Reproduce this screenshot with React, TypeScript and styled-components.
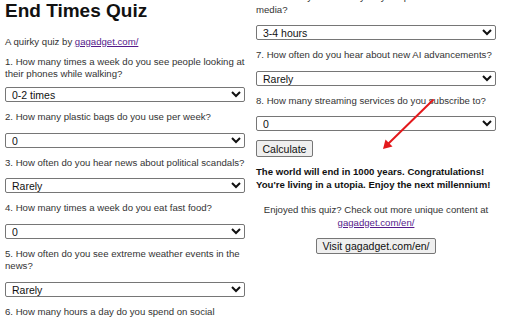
import React from "react";
import styled, { createGlobalStyle } from "styled-components";

const Global = createGlobalStyle`
  html, body { margin: 0; padding: 0; background: #fff; overflow: hidden; }
  body { font-family: "Liberation Sans", Arial, sans-serif; color: #333; }
  #root { width: 512px; height: 320px; overflow: hidden; }
`;

const Page = styled.div`
  position: relative;
  display: grid;
  grid-template-columns: 240px 240px;
  column-gap: 11px;
  padding-left: 5px;
  height: 320px;
  overflow: hidden;
  font-size: 9.6px;
`;

const Column = styled.div<{ $offset?: number }>`
  display: flex;
  flex-direction: column;
  align-items: stretch;
  margin-top: ${(p) => p.$offset ?? 0}px;
`;

const Title = styled.h1`
  margin: 0;
  font-size: 19px;
  line-height: 22px;
  font-weight: 700;
  color: #111;
`;

const Intro = styled.p`
  margin: 12.5px 0 8px;
  line-height: 13px;
`;

const Link = styled.a`
  color: #551a8b;
  text-decoration: underline;
`;

const Label = styled.label<{ $gap?: number }>`
  display: block;
  line-height: 12.5px;
  margin: 0 0 ${(p) => p.$gap ?? 9}px;
`;

const Select = styled.select`
  display: block;
  box-sizing: border-box;
  width: 100%;
  height: 15px;
  margin: 0 0 9px;
  padding: 0 2px;
  font-family: "Liberation Sans", Arial, sans-serif;
  font-size: 10.5px;
  color: #111;
  background: #fff;
  border: 1px solid #767676;
  border-radius: 2px;
`;

const Button = styled.button`
  box-sizing: border-box;
  height: 16.5px;
  padding: 0 5.5px;
  font-family: "Liberation Sans", Arial, sans-serif;
  font-size: 10.56px;
  line-height: 12px;
  color: #111;
  background: #efefef;
  border: 1px solid #767676;
  border-radius: 2px;
`;

const ButtonRow = styled.div<{ $center?: boolean }>`
  display: flex;
  justify-content: ${(p) => (p.$center ? "center" : "flex-start")};
`;

const Result = styled.p`
  margin: 9.5px 0 0;
  font-weight: 700;
  line-height: 12.5px;
  color: #111;
`;

const Promo = styled.p`
  margin: 13px 0 8.5px;
  text-align: center;
  line-height: 12.5px;
`;

const Arrow = styled.svg`
  position: absolute;
  left: 0;
  top: 0;
  pointer-events: none;
`;

type Q = { label: string; value: string; options: string[] };

const left: Q[] = [
  {
    label: "1. How many times a week do you see people looking at their phones while walking?",
    value: "0-2 times",
    options: ["0-2 times", "3-5 times", "6-10 times", "More than 10 times"],
  },
  { label: "2. How many plastic bags do you use per week?", value: "0", options: ["0", "1-3", "4-6", "7+"] },
  {
    label: "3. How often do you hear news about political scandals?",
    value: "Rarely",
    options: ["Rarely", "Sometimes", "Often", "Always"],
  },
  { label: "4. How many times a week do you eat fast food?", value: "0", options: ["0", "1-2", "3-4", "5+"] },
  {
    label: "5. How often do you see extreme weather events in the news?",
    value: "Rarely",
    options: ["Rarely", "Sometimes", "Often", "Always"],
  },
];

const q6: Q = {
  label: "6. How many hours a day do you spend on social media?",
  value: "3-4 hours",
  options: ["0-1 hours", "1-2 hours", "3-4 hours", "5+ hours"],
};

const right: Q[] = [
  q6,
  {
    label: "7. How often do you hear about new AI advancements?",
    value: "Rarely",
    options: ["Rarely", "Sometimes", "Often", "Always"],
  },
  {
    label: "8. How many streaming services do you subscribe to?",
    value: "0",
    options: ["0", "1", "2-3", "4+"],
  },
];

const Question: React.FC<{ q: Q; gap?: number }> = ({ q, gap }) => (
  <>
    <Label $gap={gap}>{q.label}</Label>
    <Select defaultValue={q.value}>
      {q.options.map((o) => (
        <option key={o} value={o}>
          {o}
        </option>
      ))}
    </Select>
  </>
);

export default function App() {
  return (
    <>
      <Global />
      <Page>
        <Column>
          <Title>End Times Quiz</Title>
          <Intro>
            A quirky quiz by <Link href="#">gagadget.com/</Link>
          </Intro>
          {left.map((q, i) => (
            <Question key={q.label} q={q} gap={i === 0 ? 6.5 : 9} />
          ))}
          <Question q={q6} />
        </Column>
        <Column $offset={-8.75}>
          {right.map((q) => (
            <Question key={q.label} q={q} />
          ))}
          <ButtonRow>
            <Button>Calculate</Button>
          </ButtonRow>
          <Result>
            The world will end in 1000 years. Congratulations! You're living in a utopia. Enjoy the next
            millennium!
          </Result>
          <Promo>
            Enjoyed this quiz? Check out more unique content at <Link href="#">gagadget.com/en/</Link>
          </Promo>
          <ButtonRow $center>
            <Button>Visit gagadget.com/en/</Button>
          </ButtonRow>
        </Column>
        <Arrow width="512" height="320" viewBox="0 0 512 320">
          <line x1="433" y1="100" x2="388" y2="144" stroke="#e3191c" strokeWidth="2" strokeLinecap="round" />
          <polygon points="383,149 385.5,139.5 392.5,146.5" fill="#e3191c" />
        </Arrow>
      </Page>
    </>
  );
}
